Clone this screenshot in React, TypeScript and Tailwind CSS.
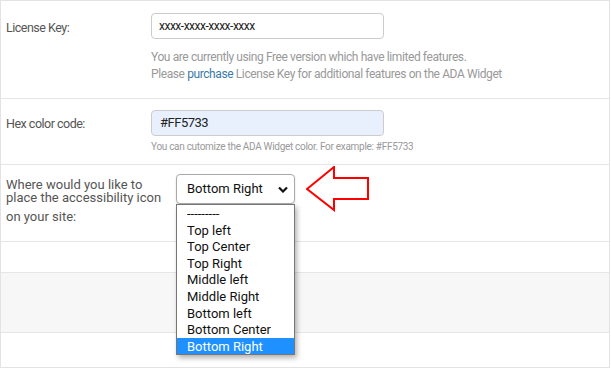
import React from 'react';

const options = [
  '---------',
  'Top left',
  'Top Center',
  'Top Right',
  'Middle left',
  'Middle Right',
  'Bottom left',
  'Bottom Center',
  'Bottom Right',
];

const App = () => {
  return (
    <div className="w-[611px] h-[369px] bg-white font-['Roboto',sans-serif]">
      <div className="w-[610px] h-[368px] border border-[#e3e3e3] flex flex-col">
        {/* license key */}
        <div className="h-[98px] flex border-b border-[#e6e6e6]">
          <div className="w-[150px] pl-[5px] pt-[19px] text-[12.5px] leading-[16px] tracking-[-0.5px] text-[#555]">
            License Key:
          </div>
          <div className="pt-[12px]">
            <div className="w-[233px] h-[26px] border border-[#ccc] rounded-[4px] px-[7px] flex items-center text-[12px] tracking-[-0.5px] text-[#222]">
              xxxx-xxxx-xxxx-xxxx
            </div>
            <p className="mt-[10px] text-[12px] leading-[17px] tracking-[-0.4px] text-[#999]">
              You are currently using Free version which have limited features.
              <br />
              Please <span className="text-[#3a7aa8]">purchase</span> License Key for additional
              features on the ADA Widget
            </p>
          </div>
        </div>

        {/* hex color */}
        <div className="h-[66px] flex border-b border-[#e6e6e6]">
          <div className="w-[150px] pl-[5px] pt-[17px] text-[12.5px] leading-[16px] tracking-[-0.5px] text-[#555]">
            Hex color code:
          </div>
          <div className="pt-[11px]">
            <div className="w-[233px] h-[26px] border border-[#ccc] rounded-[4px] bg-[#e8f0fe] px-[8px] flex items-center text-[13px] tracking-[-0.5px] text-[#222]">
              #FF5733
            </div>
            <p className="mt-[4px] text-[10px] leading-[14px] tracking-[-0.3px] text-[#999]">
              You can cutomize the ADA Widget color. For example: #FF5733
            </p>
          </div>
        </div>

        {/* icon position */}
        <div className="h-[77px] flex border-b border-[#e6e6e6]">
          <div className="w-[175px] pl-[5px] pt-[13px] text-[13px] text-[#555]">
            <p className="w-[160px] leading-[13px]">
              Where would you like to place the accessibility icon
            </p>
            <p className="leading-[13px] mt-[6px]">on your site:</p>
          </div>
          <div className="pt-[1px] flex items-center self-start gap-[11px]">
            <div className="relative">
              <div className="w-[119px] h-[30px] border border-[#aaa] rounded-[4px] pl-[10px] pr-[6px] flex items-center justify-between text-[13px] text-[#111] shadow-[0_1px_2px_rgba(0,0,0,0.15)]">
                <span>Bottom Right</span>
                <svg width="10" height="7" viewBox="0 0 10 7">
                  <path d="M1 1.5 L5 5.5 L9 1.5" fill="none" stroke="#111" strokeWidth="2.2" />
                </svg>
              </div>
              <ul className="absolute left-0 top-[30px] z-10 w-[119px] border border-[#767676] bg-white shadow-[2px_3px_5px_rgba(0,0,0,0.3)]">
                {options.map((o) => (
                  <li
                    key={o}
                    className={`h-[16.6px] pl-[10px] text-[13px] leading-[17px] ${
                      o === 'Bottom Right' ? 'bg-[#1e90ff] text-white' : 'text-[#111]'
                    }`}
                  >
                    {o}
                  </li>
                ))}
              </ul>
            </div>
            <svg width="64" height="46" viewBox="0 0 64 46">
              <polygon
                points="1,23 28,1 28,12 62,12 62,33 28,33 28,44"
                fill="white"
                stroke="#ff0000"
                strokeWidth="2"
              />
            </svg>
          </div>
        </div>

        <div className="h-[31px] border-b border-[#e6e6e6]" />
        <div className="h-[60px] bg-[#f7f7f7] border-b border-[#e6e6e6]" />
        <div className="flex-1" />
      </div>
    </div>
  );
};

export default App;
